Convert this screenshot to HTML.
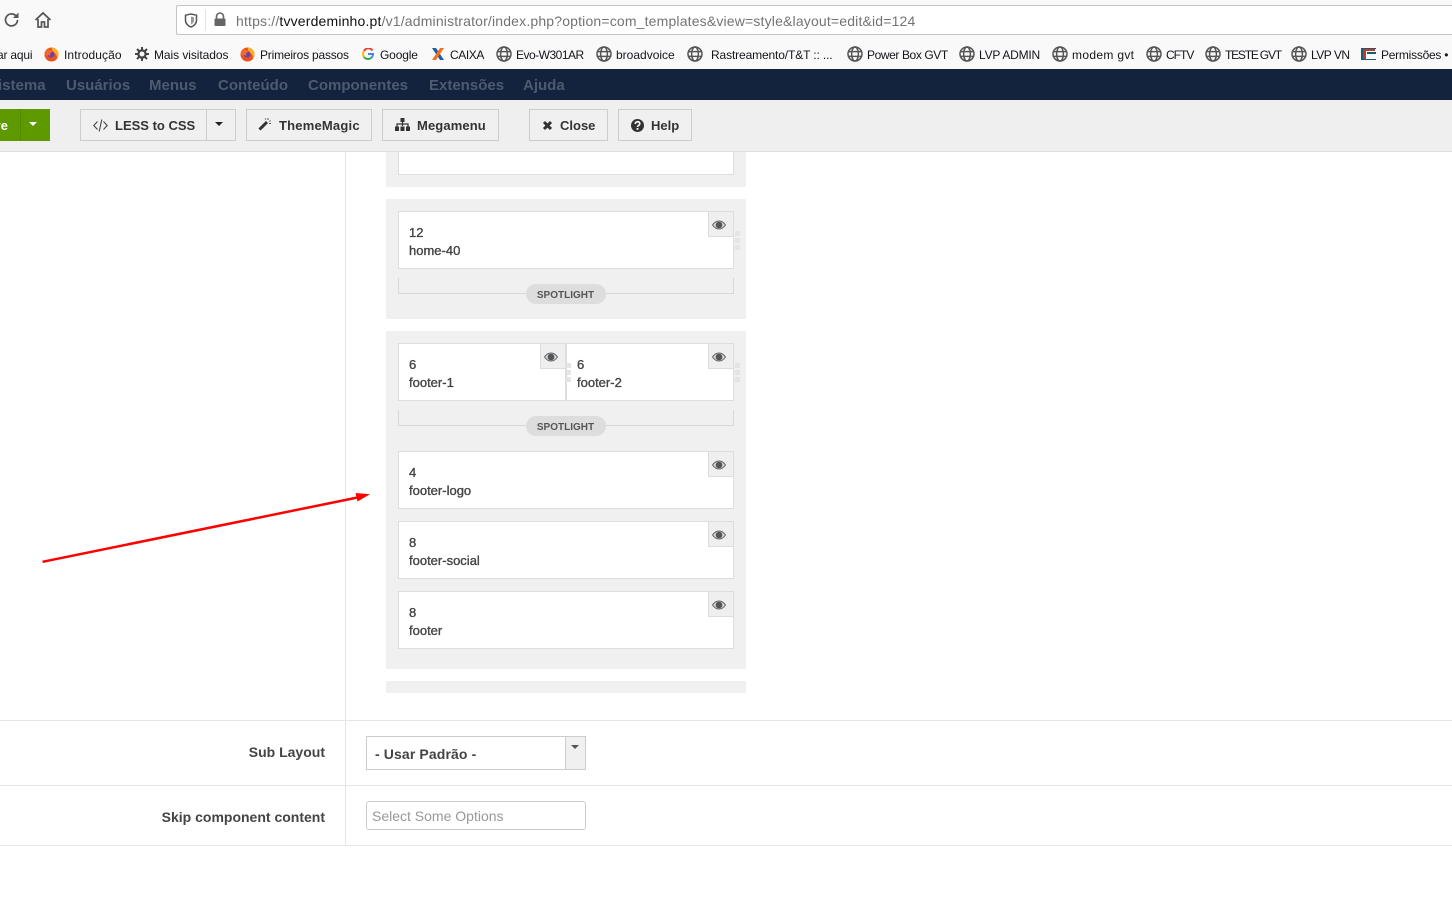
<!DOCTYPE html>
<html lang="pt"><head><meta charset="utf-8"><title>Template</title>
<style>
html,body{margin:0;padding:0;width:1452px;height:901px;overflow:hidden;background:#fff;font-family:"Liberation Sans",sans-serif}
.a,.t{position:absolute}
.t{white-space:nowrap}
.bm{font-size:12px;color:#15141a;top:47px;line-height:16px}
.nav{font-size:15px;font-weight:bold;color:#4e5a6e;top:77px;line-height:18px}
.btn{position:absolute;top:109px;height:30px;border:1px solid #ccc;background:#f0f0f0;box-sizing:content-box}
.bt{font-size:13px;font-weight:bold;color:#333;top:118px;line-height:16px}
.panel{position:absolute;left:386px;width:360px;background:#f0f0f0}
.box{position:absolute;background:#fff;border:1px solid #ddd;box-sizing:border-box;height:58px}
.eye{position:absolute;right:-1px;top:-1px;width:26px;height:26px;background:#efefef;border:1px solid #ddd;box-sizing:border-box}
.eye svg{position:absolute;left:3px;top:8px}
.n{position:absolute;left:10px;font-size:13px;line-height:14px;color:#444;-webkit-text-stroke:.35px #444}
.sl{position:absolute;left:398px;width:336px;height:16px;border:1px solid #d8d8d8;border-top:0;box-sizing:border-box}
.pill{position:absolute;left:526px;width:80px;height:20px;border-radius:10px;background:#ddd;color:#555;font-size:10px;font-weight:bold;text-align:center;line-height:23px;text-indent:-1px}
.dots{position:absolute;width:5px;height:19px;background:repeating-linear-gradient(#e4e4e4 0,#e4e4e4 5px,transparent 5px,transparent 7px)}
</style></head><body>

<svg width="0" height="0" style="position:absolute"><defs>
<symbol id="g" viewBox="0 0 16 16"><g fill="none" stroke="#555" stroke-width="1.500"><circle cx="8" cy="8" r="7"/><ellipse cx="8" cy="8" rx="3.400" ry="7"/><path d="M1.200 5.600h13.600M1.200 10.400h13.600"/></g></symbol>
<symbol id="ff" viewBox="0 0 16 16"><circle cx="8" cy="8" r="7.500" fill="#e8541f"/><path d="M8 .5a7.500 7.500 0 0 1 7.500 7.500c0 2-1 3.500-2 4.500 1-3-1-6-4-6.500z" fill="#ffb020"/><circle cx="7.500" cy="7.500" r="3.700" fill="#6a3fb5"/><path d="M1 8c0-3 2-6 5-7-1 1-1 2-1 3 2-1 4 0 5 1-3 0-4 2-3 4-2 0-4 0-6-1z" fill="#f36b2a"/></symbol>
<symbol id="e" viewBox="0 0 14 10"><path d="M.5 5C2.500 2 4.500 1 7 1s4.500 1 6.500 4C11.500 8 9.500 9 7 9S2.500 8 .5 5z" fill="#cfd6dc" stroke="#666"/><circle cx="7" cy="5" r="3.300" fill="#555"/></symbol>
</defs></svg>

<!-- browser chrome -->
<div class="a" style="left:0;top:0;width:1452px;height:69px;background:#f9f9fa"></div>
<svg class="a" style="left:3px;top:11px" width="18" height="18" viewBox="0 0 18 18"><path d="M14.500 9a6 6 0 1 1-1.700-4.300" fill="none" stroke="#555" stroke-width="1.700"/><path d="M15.500 1.500v5.500h-5.500z" fill="#555"/></svg>
<svg class="a" style="left:34px;top:11px" width="18" height="18" viewBox="0 0 18 18"><path d="M1.500 9L9 2l7.500 7" fill="none" stroke="#555" stroke-width="1.800"/><path d="M4 8v8h3.500v-5h3v5H14V8" fill="none" stroke="#555" stroke-width="1.700"/></svg>
<div class="a" style="left:176px;top:5px;width:1290px;height:30px;background:#fff;border:1px solid #c4c4c4;border-radius:2px;box-sizing:border-box"></div>
<svg class="a" style="left:184px;top:13px" width="14" height="15" viewBox="0 0 14 15"><path d="M1.500 2.200L7 1l5.500 1.200v5C12.500 10.500 10 13 7 14 4 13 1.500 10.500 1.500 7.200z" fill="none" stroke="#555" stroke-width="1.500"/><path d="M7 3.500l3 .7v3c0 2-1.300 3.500-3 4.300z" fill="#999"/></svg>
<div class="a" style="left:205px;top:9px;width:1px;height:22px;background:#e2e2e2"></div>
<svg class="a" style="left:213px;top:12px" width="14" height="15" viewBox="0 0 14 15"><path d="M3.500 7V4.500a3.500 3.500 0 0 1 7 0V7" fill="none" stroke="#666" stroke-width="1.600"/><rect x="1.500" y="6.500" width="11" height="7.500" rx="1" fill="#666"/></svg>
<div class="t" style="left:236px;top:12px;font-size:14px;line-height:18px;color:#737373;letter-spacing:.17px">https://<span style="color:#111">tvverdeminho.pt</span>/v1/administrator/index.php?option=com_templates&amp;view=style&amp;layout=edit&amp;id=124</div>

<!-- bookmarks -->
<div class="t bm" style="left:-3px;letter-spacing:-.2px">ar aqui</div>
<svg class="a" style="left:44px;top:47px" width="15" height="15"><use href="#ff"/></svg>
<div class="t bm" style="left:64px;letter-spacing:.1px">Introdução</div>
<svg class="a" style="left:135px;top:47px" width="14" height="14" viewBox="0 0 14 14"><circle cx="7" cy="7" r="3.600" fill="none" stroke="#444" stroke-width="2.200"/><path d="M7 0v3M7 11v3M0 7h3M11 7h3M2 2l2 2M10 10l2 2M12 2l-2 2M4 10l-2 2" stroke="#444" stroke-width="2"/></svg>
<div class="t bm" style="left:154px;letter-spacing:-.07px">Mais visitados</div>
<svg class="a" style="left:240px;top:47px" width="15" height="15"><use href="#ff"/></svg>
<div class="t bm" style="left:260px;letter-spacing:-.2px">Primeiros passos</div>
<svg class="a" style="left:362px;top:48px" width="12" height="12" viewBox="0 0 12 12"><path d="M10.500 2.500A5 5 0 0 0 2 3" fill="none" stroke="#ea4335" stroke-width="2"/><path d="M2 3a5 5 0 0 0 0 6" fill="none" stroke="#fbbc05" stroke-width="2"/><path d="M2 9a5 5 0 0 0 8 0" fill="none" stroke="#34a853" stroke-width="2"/><path d="M6 6h5c0 1.500-.5 2.500-1 3" fill="none" stroke="#4285f4" stroke-width="2"/></svg>
<div class="t bm" style="left:380px;letter-spacing:-.15px">Google</div>
<svg class="a" style="left:431px;top:47px" width="14" height="14" viewBox="0 0 14 14"><path d="M1 1h4l8 12H9z" fill="#1a5fa8"/><path d="M13 1H9L1 13h4z" fill="#f37021"/></svg>
<div class="t bm" style="left:450px;letter-spacing:-.4px">CAIXA</div>
<svg class="a" style="left:496px;top:46px" width="16" height="16"><use href="#g"/></svg>
<div class="t bm" style="left:516px;letter-spacing:-.5px">Evo-W301AR</div>
<svg class="a" style="left:596px;top:46px" width="16" height="16"><use href="#g"/></svg>
<div class="t bm" style="left:616px">broadvoice</div>
<svg class="a" style="left:687px;top:46px" width="16" height="16"><use href="#g"/></svg>
<div class="t bm" style="left:711px;letter-spacing:-.13px">Rastreamento/T&amp;T :: ...</div>
<svg class="a" style="left:847px;top:46px" width="16" height="16"><use href="#g"/></svg>
<div class="t bm" style="left:867px;letter-spacing:-.4px">Power Box GVT</div>
<svg class="a" style="left:959px;top:46px" width="16" height="16"><use href="#g"/></svg>
<div class="t bm" style="left:979px;letter-spacing:-.22px">LVP ADMIN</div>
<svg class="a" style="left:1052px;top:46px" width="16" height="16"><use href="#g"/></svg>
<div class="t bm" style="left:1072px;letter-spacing:.33px">modem gvt</div>
<svg class="a" style="left:1146px;top:46px" width="16" height="16"><use href="#g"/></svg>
<div class="t bm" style="left:1166px;letter-spacing:-1px">CFTV</div>
<svg class="a" style="left:1205px;top:46px" width="16" height="16"><use href="#g"/></svg>
<div class="t bm" style="left:1225px;letter-spacing:-1.2px">TESTE GVT</div>
<svg class="a" style="left:1291px;top:46px" width="16" height="16"><use href="#g"/></svg>
<div class="t bm" style="left:1311px;letter-spacing:-.5px">LVP VN</div>
<svg class="a" style="left:1361px;top:47px" width="16" height="14" viewBox="0 0 16 14"><path d="M0 1h15v12H0z" fill="#1c5a6e"/><path d="M2 2h13v3H6v2h9v5H2z" fill="#fff"/><path d="M2 2h12v2H5v8H2z" fill="#c0392b"/></svg>
<div class="t bm" style="left:1381px;letter-spacing:-.25px">Permissões •</div>

<!-- nav -->
<div class="a" style="left:0;top:69px;width:1452px;height:31px;background:#13233e"></div>
<div class="t nav" style="left:-12px">Sistema</div>
<div class="t nav" style="left:66px">Usuários</div>
<div class="t nav" style="left:149px">Menus</div>
<div class="t nav" style="left:218px">Conteúdo</div>
<div class="t nav" style="left:308px">Componentes</div>
<div class="t nav" style="left:429px">Extensões</div>
<div class="t nav" style="left:523px">Ajuda</div>

<!-- toolbar -->
<div class="a" style="left:0;top:100px;width:1452px;height:51px;background:#efefef;border-bottom:1px solid #ddd"></div>
<div class="a" style="left:0;top:109px;width:50px;height:32px;background:#5f9900;overflow:hidden">
  <div class="t" style="right:42px;top:9px;font-size:13px;font-weight:bold;color:#fff;line-height:16px">Save</div>
  <div class="a" style="left:20px;top:0;width:1px;height:32px;background:#548800"></div>
  <div class="a" style="left:29px;top:13px;border:4px solid transparent;border-top-color:#fff;border-bottom:0"></div>
</div>

<div class="btn" style="left:80px;width:154px"></div>
<div class="a" style="left:206px;top:110px;width:1px;height:30px;background:#ccc"></div>
<svg class="a" style="left:93px;top:119px" width="15" height="13" viewBox="0 0 15 13"><path d="M4.500 2.500L.8 6.500l3.700 4M10.500 2.500l3.700 4-3.700 4M8.800 .5L6.200 12.500" fill="none" stroke="#444" stroke-width="1.100"/></svg>
<div class="t bt" style="left:115px">LESS to CSS</div>
<div class="a" style="left:215px;top:122px;border:4px solid transparent;border-top-color:#222;border-bottom:0"></div>

<div class="btn" style="left:246px;width:124px"></div>
<svg class="a" style="left:258px;top:117px" width="14" height="14" viewBox="0 0 14 14"><path d="M1.500 12.500L9 5" stroke="#333" stroke-width="3"/><path d="M10 1v2M12.500 3.500l-1 1M13 6.500h-2M7 1.500l1 1" stroke="#555"/></svg>
<div class="t bt" style="left:279px;letter-spacing:.2px">ThemeMagic</div>

<div class="btn" style="left:382px;width:115px"></div>
<svg class="a" style="left:395px;top:118px" width="15" height="13" viewBox="0 0 15 13"><path d="M5.500 0h4v4h-4zM0 8.500h4V13H0zM5.500 8.500h4V13h-4zM11 8.500h4V13h-4z" fill="#333"/><path d="M7.500 4v4M2 8.500V6h11v2.500" fill="none" stroke="#333" stroke-width="1.200"/></svg>
<div class="t bt" style="left:417px;letter-spacing:.12px">Megamenu</div>

<div class="btn" style="left:529px;width:77px"></div>
<svg class="a" style="left:542px;top:120px" width="11" height="11" viewBox="0 0 11 11"><path d="M2 2l7 7M9 2l-7 7" stroke="#333" stroke-width="3"/></svg>
<div class="t bt" style="left:560px">Close</div>

<div class="btn" style="left:618px;width:72px"></div>
<svg class="a" style="left:631px;top:119px" width="13" height="13" viewBox="0 0 13 13"><circle cx="6.500" cy="6.500" r="6.500" fill="#333"/><path d="M4.300 5c0-3 4.500-3 4.500-.3 0 1.800-2.300 1.600-2.300 3.300" fill="none" stroke="#fff" stroke-width="1.600"/><rect x="5.600" y="9" width="1.800" height="1.800" fill="#fff"/></svg>
<div class="t bt" style="left:651px">Help</div>

<!-- main lines -->
<div class="a" style="left:345px;top:152px;width:1px;height:694px;background:#e5e5e5"></div>
<div class="a" style="left:0;top:720px;width:1452px;height:1px;background:#e5e5e5"></div>
<div class="a" style="left:0;top:785px;width:1452px;height:1px;background:#e5e5e5"></div>
<div class="a" style="left:0;top:845px;width:1452px;height:1px;background:#e5e5e5"></div>

<!-- panels -->
<div class="panel" style="top:152px;height:35px"></div>
<div class="a" style="left:398px;top:152px;width:336px;height:23px;background:#fff;border:1px solid #ddd;border-top:0;box-sizing:border-box"></div>

<div class="panel" style="top:199px;height:120px"></div>
<div class="box" style="left:398px;top:211px;width:336px"><div class="eye"><svg width="14" height="10"><use href="#e"/></svg></div><div class="n" style="top:14px">12</div><div class="n" style="top:32px">home-40</div></div>
<div class="dots" style="left:735px;top:231px"></div>
<div class="sl" style="top:278px"></div>
<div class="pill" style="top:284px">SPOTLIGHT</div>

<div class="panel" style="top:331px;height:338px"></div>
<div class="box" style="left:398px;top:343px;width:168px"><div class="eye"><svg width="14" height="10"><use href="#e"/></svg></div><div class="n" style="top:14px">6</div><div class="n" style="top:32px">footer-1</div></div>
<div class="box" style="left:566px;top:343px;width:168px"><div class="eye"><svg width="14" height="10"><use href="#e"/></svg></div><div class="n" style="top:14px">6</div><div class="n" style="top:32px">footer-2</div></div>
<div class="dots" style="left:566px;top:363px"></div>
<div class="dots" style="left:735px;top:363px"></div>
<div class="sl" style="top:410px"></div>
<div class="pill" style="top:416px">SPOTLIGHT</div>
<div class="box" style="left:398px;top:451px;width:336px"><div class="eye"><svg width="14" height="10"><use href="#e"/></svg></div><div class="n" style="top:14px">4</div><div class="n" style="top:32px">footer-logo</div></div>
<div class="box" style="left:398px;top:521px;width:336px"><div class="eye"><svg width="14" height="10"><use href="#e"/></svg></div><div class="n" style="top:14px">8</div><div class="n" style="top:32px">footer-social</div></div>
<div class="box" style="left:398px;top:591px;width:336px"><div class="eye"><svg width="14" height="10"><use href="#e"/></svg></div><div class="n" style="top:14px">8</div><div class="n" style="top:32px">footer</div></div>

<div class="panel" style="top:681px;height:12px"></div>

<!-- arrow -->
<svg class="a" style="left:30px;top:485px" width="350" height="85"><path d="M12.500 76.800L330 12" stroke="#f00" stroke-width="2.500" fill="none"/><path d="M340 9.300L325.500 8l2 8.500z" fill="#f00"/></svg>

<!-- form -->
<div class="t" style="right:1127px;top:744px;font-size:14px;font-weight:bold;color:#444;line-height:16px">Sub Layout</div>
<div class="a" style="left:366px;top:736px;width:220px;height:34px;border:1px solid #ccc;box-sizing:border-box;background:#fff"></div>
<div class="a" style="left:565px;top:737px;width:19px;height:32px;background:#f0f0f0;border-left:1px solid #ccc"></div>
<div class="a" style="left:571px;top:745px;border:4px solid transparent;border-top-color:#555;border-bottom:0"></div>
<div class="t" style="left:375px;top:746px;font-size:14px;font-weight:bold;color:#444;line-height:17px;letter-spacing:.12px">- Usar Padrão -</div>

<div class="t" style="right:1127px;top:809px;font-size:14px;font-weight:bold;color:#444;line-height:16px">Skip component content</div>
<div class="a" style="left:366px;top:801px;width:220px;height:29px;border:1px solid #ccc;border-radius:3px;box-sizing:border-box;background:#fff"></div>
<div class="t" style="left:372px;top:808px;font-size:14px;color:#999;line-height:16px">Select Some Options</div>
</body></html>
